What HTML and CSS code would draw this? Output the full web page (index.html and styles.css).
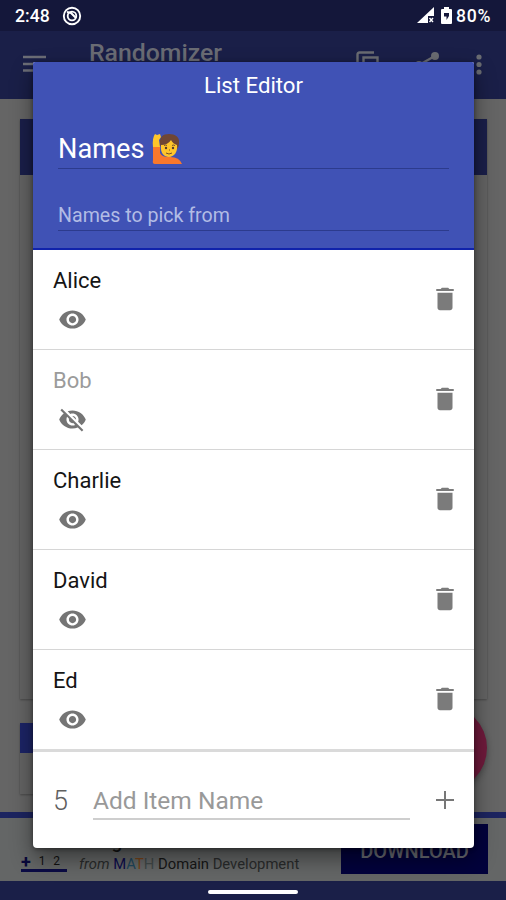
FILE: index.html
```html
<!DOCTYPE html>
<html lang="en">
<head>
<meta charset="utf-8">
<title>List Editor</title>
<link rel="stylesheet" href="styles.css">
</head>
<body>
<svg class="defs" aria-hidden="true">
  <symbol id="eye" viewBox="0 0 24 24"><path d="M12 4.5C7 4.5 2.73 7.61 1 12c1.73 4.39 6 7.5 11 7.5s9.27-3.11 11-7.5c-1.73-4.39-6-7.5-11-7.5zM12 17c-2.76 0-5-2.24-5-5s2.24-5 5-5 5 2.24 5 5-2.24 5-5 5zm0-8c-1.66 0-3 1.34-3 3s1.34 3 3 3 3-1.34 3-3-1.34-3-3-3z"/></symbol>
  <symbol id="eye-off" viewBox="0 0 24 24"><path d="M12 7c2.76 0 5 2.24 5 5 0 .65-.13 1.26-.36 1.83l2.92 2.92c1.51-1.26 2.7-2.89 3.43-4.75-1.73-4.39-6-7.5-11-7.5-1.4 0-2.74.25-3.98.7l2.16 2.16C10.74 7.13 11.35 7 12 7zM2 4.27l2.28 2.28.46.46C3.08 8.3 1.78 10.02 1 12c1.73 4.39 6 7.5 11 7.5 1.55 0 3.03-.3 4.38-.84l.42.42L19.73 22 21 20.73 3.27 3 2 4.27zM7.53 9.8l1.55 1.55c-.05.21-.08.43-.08.65 0 1.66 1.34 3 3 3 .22 0 .44-.03.65-.08l1.55 1.55c-.67.33-1.41.53-2.2.53-2.76 0-5-2.24-5-5 0-.79.2-1.53.53-2.2zm4.31-.78l3.15 3.15.02-.16c0-1.66-1.34-3-3-3l-.17.01z"/></symbol>
  <symbol id="trash" viewBox="0 0 24 24"><path d="M6 19c0 1.100.9 2 2 2h8c1.100 0 2-.9 2-2V7H6v12zM19 4h-3.500l-1-1h-5l-1 1H5v1.600h14V4z"/></symbol>
</svg>
<div class="screen">
  <header class="status">
    <span class="clock">2:48</span>
    <svg class="notif" viewBox="0 0 20 20"><circle cx="10" cy="10" r="8.200" fill="none" stroke="#fff" stroke-width="1.900"/><circle cx="10" cy="10" r="4.300" fill="none" stroke="#fff" stroke-width="1.800"/><path d="M5 6l4 1 5 5" fill="none" stroke="#fff" stroke-width="2"/></svg>
    <span class="spacer"></span>
    <svg class="signal" viewBox="0 0 17 17"><path fill="#fff" d="M17 0v9h-6v7H0z"/><path d="M12.500 11l3.500 4m0-4l-3.500 4" stroke="#fff" stroke-width="1.400"/></svg>
    <svg class="battery" viewBox="0 0 11 17"><path fill="#fff" d="M3 0h5v2h2q1 0 1 1v13q0 1-1 1H1q-1 0-1-1V3q0-1 1-1h2z"/><path fill="#14173a" d="M3 6h5v3L5.500 13V9.500H3z"/></svg>
    <span class="percent">80%</span>
  </header>
  <nav class="appbar">
    <svg class="menu" viewBox="0 0 24 18"><path d="M0 2h23M0 9h23M0 15.500h23" stroke="#6c6e77" stroke-width="2.400"/></svg>
    <h1>Randomizer</h1>
    <span class="spacer"></span>
    <svg class="copy" viewBox="0 0 24 26"><path d="M1.500 20V3.500q0-2 2-2H18M7.500 6.500h14v18h-14z" fill="none" stroke="#6a6c72" stroke-width="2.400"/></svg>
    <svg class="share" viewBox="0 0 24 26"><path d="M20 4L4 13l16 9" fill="none" stroke="#6a6c72" stroke-width="2.400"/><g fill="#6a6c72"><circle cx="20" cy="4" r="4"/><circle cx="4" cy="13" r="4"/><circle cx="20" cy="22" r="4"/></g></svg>
    <svg class="more" viewBox="0 0 6 22"><g fill="#6a6c72"><circle cx="3" cy="3" r="2.600"/><circle cx="3" cy="10.500" r="2.600"/><circle cx="3" cy="18" r="2.600"/></g></svg>
  </nav>
  <main class="page">
    <section class="card card-main"><div class="card-head"></div></section>
    <section class="card card-result"><div class="card-head"></div><span class="fab"></span></section>
  </main>
  <aside class="ad">
    <div class="ad-icon"><b>+</b><i>1</i><i>2</i></div>
    <div class="ad-text">
      <strong>Integers</strong>
      <p><em>from</em> <span class="m">M</span><span class="a">A</span><span class="t">T</span><span class="h">H</span> Domain <span class="dev">Development</span></p>
    </div>
    <div class="download">DOWNLOAD</div>
  </aside>
  <footer class="gesture"><span></span></footer>

  <div class="dialog">
    <div class="dialog-head">
      <h2>List Editor</h2>
      <div class="field title-field"><span>Names</span>
        <svg class="emoji" viewBox="0 0 30 32"><path fill="#6f4634" d="M8 12C7 4 11 1 17 1s11 3 10 9c0 4-2 6-3 7H11z"/><path fill="#ffc52a" d="M9 12q7 0 10-5 2 4 6 5c1 7-3 12-8 12S8 20 9 12z"/><path fill="#f9782c" d="M1 13h7v7q2 4 8 4 11-1 14 7H3q-3 0-2-4z"/><path fill="#ffc52a" d="M1 14Q0 5 3 1l2 1 3-1 1 3-2 3 1 7z"/><g fill="#543930"><circle cx="14" cy="15" r="1.200"/><circle cx="21" cy="15" r="1.200"/></g><path d="M14 20q3 2 6 0M12 12.500q2-1 3 0M20 12.500q1-1 3 0M17 17h1" fill="none" stroke="#73502c" stroke-width="1"/></svg>
      </div>
      <div class="field desc-field">Names to pick from</div>
    </div>
    <ul class="items">
      <li><div><span>Alice</span><svg class="eye"><use href="#eye"/></svg></div><svg class="trash"><use href="#trash"/></svg></li>
      <li class="off"><div><span>Bob</span><svg class="eye"><use href="#eye-off"/></svg></div><svg class="trash"><use href="#trash"/></svg></li>
      <li><div><span>Charlie</span><svg class="eye"><use href="#eye"/></svg></div><svg class="trash"><use href="#trash"/></svg></li>
      <li><div><span>David</span><svg class="eye"><use href="#eye"/></svg></div><svg class="trash"><use href="#trash"/></svg></li>
      <li><div><span>Ed</span><svg class="eye"><use href="#eye"/></svg></div><svg class="trash"><use href="#trash"/></svg></li>
    </ul>
    <div class="add-row">
      <span class="count">5</span>
      <div class="add-input">Add Item Name</div>
      <svg class="plus" viewBox="0 0 18 18"><path d="M9 0v18M0 9h18" stroke="#777" stroke-width="2"/></svg>
    </div>
  </div>
</div>
</body>
</html>
```
FILE: styles.css
```css
* { box-sizing: border-box; margin: 0; padding: 0; }
body { font-family: Roboto, "Liberation Sans", sans-serif; background: #000; }
svg { display: block; flex: none; }
.defs { position: absolute; width: 0; height: 0; }
.spacer { flex: 1; }

.screen { position: relative; width: 506px; height: 900px; overflow: hidden; display: flex; flex-direction: column; background: #656565; }

.status { height: 31px; flex: none; display: flex; align-items: center; padding: 0 14px 0 15px; background: #14173a; color: #fff; font-size: 17.6px; font-weight: 500; }
.clock { width: 47px; }
.notif { width: 20px; height: 20px; }
.signal { width: 17px; height: 17px; margin-right: 7px; }
.battery { width: 11px; height: 17px; margin-right: 4px; }
.percent { width: 36px; white-space: nowrap; letter-spacing: .8px; }

.appbar { height: 68px; flex: none; display: flex; align-items: flex-start; padding: 0 24px 0 23px; background: #1a1f48; }
.menu { width: 24px; height: 18px; margin-top: 24px; }
.appbar h1 { margin: 7px 0 0 42px; font-size: 24.8px; line-height: 30px; font-weight: 500; color: #6a6c74; }
.copy { width: 24px; height: 26px; margin-top: 20px; }
.share { width: 24px; height: 26px; margin: 21px 0 0 35px; }
.more { width: 6px; height: 22px; margin: 23px 0 0 37px; }

.page { height: 713px; flex: none; padding: 20px 19px 0 20px; }
.card { background: #646464; box-shadow: 0 1px 2px rgba(0, 0, 0, .28); }
.card-main { height: 580px; margin-bottom: 24px; }
.card-main .card-head { height: 56px; background: #1a1f4a; }
.card-result { position: relative; width: 360px; height: 71px; }
.card-result .card-head { height: 30px; background: #1c2466; }
.fab { position: absolute; right: -107px; top: -18px; width: 86px; height: 86px; border-radius: 50%; background: #701a3c; box-shadow: 0 3px 6px rgba(0, 0, 0, .3); }

.ad { height: 69px; flex: none; display: flex; align-items: flex-start; padding: 6px 18px 0 20px; border-top: 6px solid #1c2460; background: #646666; }
.ad-icon { width: 46px; height: 48px; margin: 0 1px; padding: 0 7px 0 0; display: flex; align-items: flex-end; justify-content: space-between; border-bottom: 3px solid #0b0b45; color: #08083b; line-height: 15px; }
.ad-icon b { font-size: 18px; }
.ad-icon i { font-style: normal; font-size: 12px; color: #111; }
.ad-text { flex: 1; padding: 5px 0 0 11px; color: #161616; }
.ad-text strong { display: block; font-size: 19px; line-height: 26px; font-weight: 500; }
.ad-text p { font-size: 14.8px; line-height: 18px; white-space: nowrap; }
.ad-text em, .dev { color: #292b2b; }
.m { color: #0c0c4c; }
.a { color: #20465c; }
.t { color: #774319; }
.h { color: #414949; }
.download { width: 147px; height: 50px; padding-top: 15px; background: #02023c; color: #696b73; font-size: 20px; line-height: 24px; font-weight: 500; text-align: center; }

.gesture { height: 19px; flex: none; display: flex; justify-content: center; padding-top: 9px; background: #1a1f48; }
.gesture span { width: 90px; height: 4px; border-radius: 2px; background: #fff; }

.dialog { position: absolute; left: 33px; top: 62px; width: 441px; height: 786px; display: flex; flex-direction: column; border-radius: 2px 2px 4px 4px; overflow: hidden; background: #fff; box-shadow: 0 10px 22px rgba(0, 0, 0, .45), 0 1px 4px rgba(0, 0, 0, .4); }
.dialog-head { height: 188px; flex: none; padding: 9px 25px 0; background: #4052b5; border-bottom: 2px solid #1023ab; color: #fff; }
.dialog-head h2 { font-size: 22.2px; line-height: 28px; font-weight: 400; text-align: center; }
.field { border-bottom: 1.5px solid #2c3b8d; }
.title-field { height: 70px; display: flex; align-items: flex-end; padding-bottom: 1px; font-size: 27.2px; line-height: 35px; }
.emoji { width: 30px; height: 32px; margin: 0 0 2px 8px; }
.desc-field { height: 62px; padding-top: 35px; font-size: 19.6px; line-height: 24px; color: #b2bce5; }

.items { list-style: none; }
.items li { height: 99.9px; display: flex; align-items: center; justify-content: space-between; padding: 0 14.5px 0 20px; border-bottom: 1px solid #d6d6d6; font-size: 22px; font-weight: 400; color: #151515; }
.items li:last-child { height: 102px; border-bottom: 3px solid #dadada; }
.items li div { height: 100%; padding-top: 17px; }
.items span { display: block; line-height: 28px; }
.items .off { color: #9b9b9b; }
.eye { width: 29px; height: 29px; margin: 10px 0 0 5px; fill: #757575; }
.trash { width: 30px; height: 30px; fill: #7b7b7b; }

.add-row { flex: 1; display: flex; align-items: flex-start; padding: 31px 20px 0; color: #757575; }
.count { width: 40px; font-size: 27px; line-height: 36px; font-weight: 300; color: #606060; }
.add-input { width: 317px; height: 37px; border-bottom: 2px solid #cecece; font-size: 24.5px; line-height: 36px; color: #999; }
.plus { width: 18px; height: 18px; margin: 8px 0 0 26px; }
```
